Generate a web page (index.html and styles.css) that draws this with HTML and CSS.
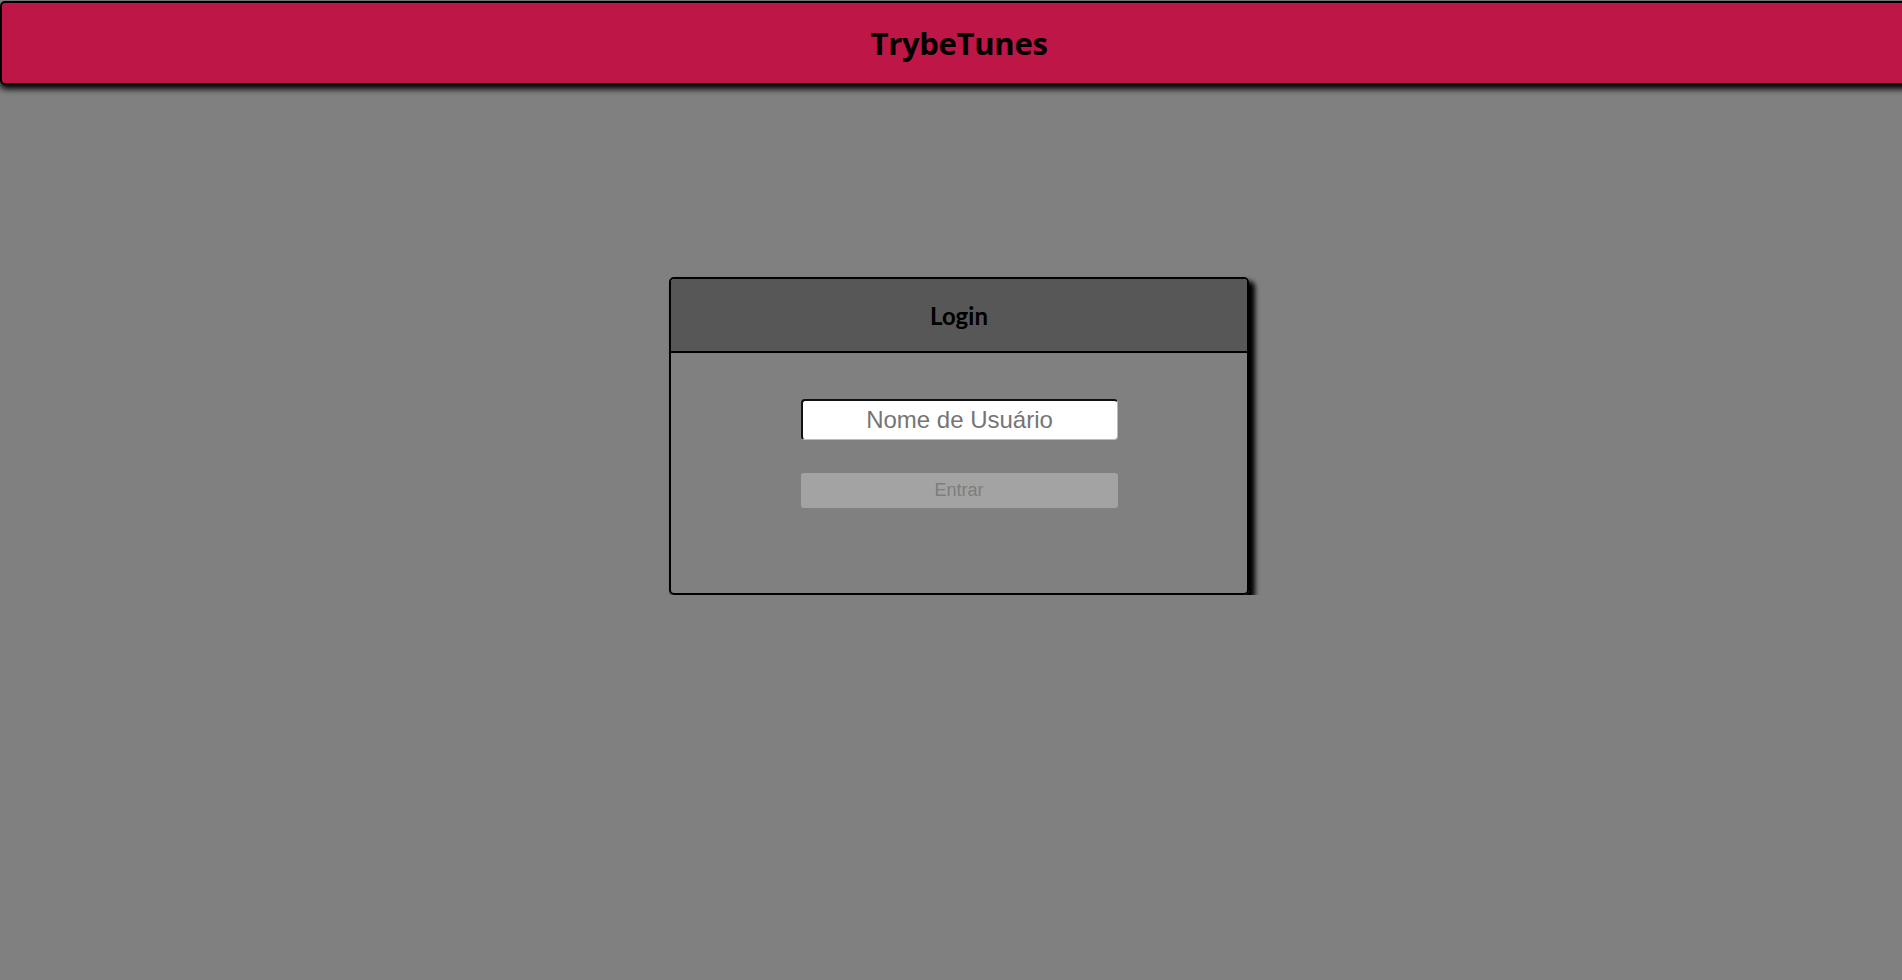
FILE: index.html
```html
<!DOCTYPE html>
<html lang="en">
<head>
    <meta charset="UTF-8">
    <meta name="viewport" content="width=device-width, initial-scale=1.0">
    <title>TrybeTunes</title>
    <link rel="stylesheet" href="styles.css">
</head>
<body>
    <div class="page">
        <header class="topbar">
            <h1>TrybeTunes</h1>
        </header>

        <main class="content">
            <div class="login-card">
                <div class="login-head">
                    <h2>Login</h2>
                </div>
                <form class="login-form">
                    <input type="text" class="user-input" placeholder="Nome de Usuário">
                    <button type="submit" class="login-btn" disabled>Entrar</button>
                </form>
            </div>
        </main>
    </div>
</body>
</html>
```

FILE: styles.css
```css
html, body {
    margin: 0;
    padding: 0;
    background: #808080;
}

.page {
    width: calc(100vw + 16px);
    font-family: 'Liberation Sans', Arial, sans-serif;
}

/* Top bar */
.topbar {
    box-sizing: border-box;
    margin-top: 1px;
    height: 84px;
    background: #be1646;
    border: 2px solid #000;
    border-radius: 5px;
    box-shadow: 0 4px 6px #000;
    display: flex;
    justify-content: center;
    align-items: center;
}

.topbar h1 {
    margin: 0;
    font-family: 'Open Sans', sans-serif;
    font-size: 31px;
    font-weight: 700;
    letter-spacing: -0.3px;
    color: #000;
}

.content {
    display: flex;
    justify-content: center;
    padding-top: 192px;
}

/* Login card */
.login-card {
    box-sizing: border-box;
    width: 580px;
    height: 318px;
    border: 2px solid #000;
    border-radius: 5px;
    box-shadow: 5px 5px 5px 1px #000;
    display: flex;
    flex-direction: column;
}

.login-head {
    height: 72px;
    background: #575757;
    border-bottom: 2px solid #000;
    border-radius: 3px 3px 0 0;
    display: flex;
    justify-content: center;
    align-items: center;
}

.login-head h2 {
    margin: 0;
    font-family: 'Lato', sans-serif;
    font-size: 24px;
    font-weight: 700;
    color: #000;
}

.login-form {
    display: flex;
    flex-direction: column;
    align-items: center;
    gap: 33px;
    padding-top: 46px;
}

.user-input {
    box-sizing: border-box;
    width: 317px;
    height: 41px;
    border-top: 2px solid #111;
    border-left: 2px solid #111;
    border-right: 1px solid #bbb;
    border-bottom: 1px solid #bbb;
    border-radius: 4px;
    background: #fff;
    font-family: 'Liberation Sans', Arial, sans-serif;
    font-size: 24px;
    text-align: center;
    outline: none;
}

.user-input::placeholder {
    color: #757575;
}

.login-btn {
    box-sizing: border-box;
    width: 317px;
    height: 35px;
    border: none;
    border-radius: 3px;
    background: #a3a3a3;
    color: #7d7d7d;
    font-family: 'Liberation Sans', Arial, sans-serif;
    font-size: 18px;
}
```
